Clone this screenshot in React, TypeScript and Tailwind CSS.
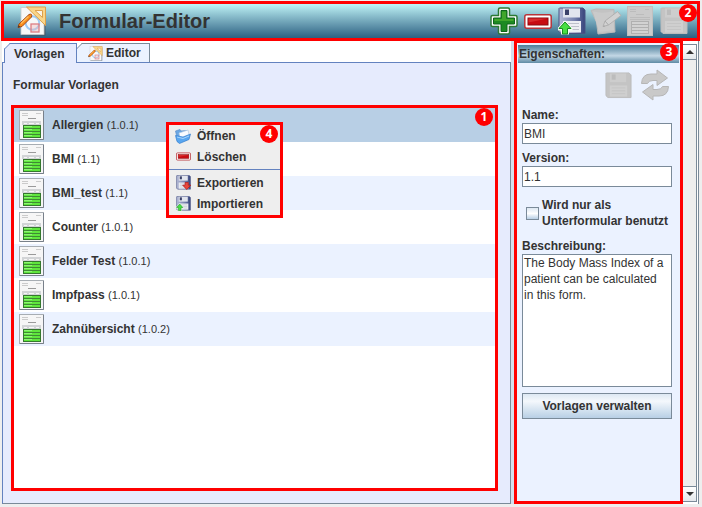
import { useState, type ReactNode } from 'react'
import clsx from 'clsx'

const templates = [
  { name: 'Allergien', version: '1.0.1' },
  { name: 'BMI', version: '1.1' },
  { name: 'BMI_test', version: '1.1' },
  { name: 'Counter', version: '1.0.1' },
  { name: 'Felder Test', version: '1.0.1' },
  { name: 'Impfpass', version: '1.0.1' },
  { name: 'Zahnübersicht', version: '1.0.2' },
]

function LogoIcon({ className }: { className: string }) {
  return (
    <svg viewBox="0 0 30 30" className={className} aria-hidden="true">
      <path d="M5 29.500H28.500V3H26V27.500H5Z" fill="#4b4f55" opacity=".75" />
      <rect x="4" y="1.500" width="23" height="27" fill="#f7f8f8" stroke="#c5cace" strokeWidth=".8" />
      <circle cx="15.500" cy="17" r="6.800" fill="none" stroke="#9ccbf6" strokeWidth="2" />
      <rect x="14" y="18" width="8" height="8" fill="#f3b9b9" fillOpacity=".4" stroke="#dc7d83" strokeWidth="1.300" />
      <path d="M9.500 1H28.500V19.500Z" fill="#f9d689" stroke="#dda04b" />
      <path d="M18 4.500H25.500V11.500Z" fill="#fbf3e4" stroke="#dda04b" />
      <path d="M1 21.500 2 18 12 8.500Q15.500 7 14.500 11L5 20.500Z" fill="#f98d1a" stroke="#a34812" />
      <path d="M4 17.500 11.500 10.500" stroke="#ffc062" strokeWidth="1.200" />
      <path d="M1 21.500 1.600 19.200 3.200 20.800Z" fill="#333" />
    </svg>
  )
}

function PlusIcon() {
  return (
    <svg viewBox="0 0 28 28" className="size-[28px]" aria-hidden="true">
      <path
        d="M10 1h8q1.500 0 1.500 1.500V8.500h6Q27 8.500 27 10v8q0 1.500-1.500 1.500h-6v6Q19.500 27 18 27h-8q-1.500 0-1.500-1.500v-6h-6Q1 19.500 1 18v-8q0-1.500 1.500-1.500h6v-6Q8.500 1 10 1Z"
        fill="#fff"
        stroke="#2c7a35"
        strokeWidth="1.500"
      />
      <path d="M11 3.500h6V11h7.500v6H17v7.500h-6V17H3.500v-6H11Z" fill="#1d8a22" stroke="#0f6418" />
      <path d="M12 4.500h4V12h7.500v2H4.500v-2H12Z" fill="#54b52f" opacity=".65" />
    </svg>
  )
}

function MinusIcon({ className }: { className: string }) {
  return (
    <svg viewBox="0 0 28 15" className={className} aria-hidden="true">
      <rect x=".8" y=".8" width="26.400" height="13.400" rx="2" fill="#fff" stroke="#b8343a" strokeWidth="1.500" />
      <rect x="4" y="4" width="20" height="7" fill="#c80b12" stroke="#8d0a10" />
      <path d="M4.500 4.500H23.500L4.500 8.500Z" fill="#e2413d" opacity=".6" />
    </svg>
  )
}

function DiskIcon({ className, disabled, arrow }: { className: string; disabled?: boolean; arrow?: 'up' | 'down' }) {
  return (
    <svg viewBox="0 0 28 28" className={className} aria-hidden="true">
      <defs>
        <linearGradient id="disk-body">
          <stop offset="0" stopColor="#b4bad6" />
          <stop offset=".6" stopColor="#7580ad" />
          <stop offset="1" stopColor="#36437b" />
        </linearGradient>
      </defs>
      <path
        d="M1.500 1H25L27 3V26.500H3L1 24.500V1.500Z"
        fill={disabled ? '#c4c4c4' : 'url(#disk-body)'}
        stroke={disabled ? '#bcbcbc' : '#4a5585'}
      />
      <rect x="5" y="1.500" width="17" height="9" fill={disabled ? '#cdcdcd' : '#e2e5ee'} />
      <rect x="7" y="2.500" width="4" height="5.500" fill={disabled ? '#bcbcbc' : '#3b4269'} />
      <rect x="5" y="14" width="18" height="11.500" fill={disabled ? '#cfcfcf' : '#eceef3'} />
      <path d="M7 16.500H21M7 19.500H21M7 22.500H21" stroke={disabled ? '#c5c5c5' : '#bdc0cb'} />
      {arrow === 'up' && (
        <path
          d="M7 13.500 14.500 21V23.500H11V27.500H3V23.500H-.5V21Z"
          fill="#f4fff2"
        />
      )}
      {arrow === 'up' && <path d="M7 15 13 21.500H9.500V27H4.500V21.500H1Z" fill="#48df42" stroke="#158b20" />}
      {arrow === 'down' && (
        <path d="M17 14H23V19H27.500L20 27 12.500 19H17Z" fill="#e8463c" stroke="#b01c1c" strokeWidth="1.500" />
      )}
    </svg>
  )
}

function EditIcon() {
  return (
    <svg viewBox="0 0 32 28" className="h-[28px] w-[32px]" aria-hidden="true">
      <path d="M1 3.500 6 2 24 2.500 25 25 8 27 6.500 15Z" fill="#c3c3c3" stroke="#bababa" />
      <path d="M3 4.500Q14 7 23 4L24 23 9 25Z" fill="#cacaca" />
      <path d="M13 19.500 15 14 27.500 4.500 31 8.500 18.500 18Z" fill="#d2d2d2" stroke="#b0b0b0" />
      <path d="M15 14 18.500 18M13 19.500 15 19" stroke="#a8a8a8" />
    </svg>
  )
}

function DisabledFormIcon() {
  return (
    <svg viewBox="0 0 26 30" className="h-[30px] w-[26px]" aria-hidden="true">
      <rect x=".5" y=".5" width="25" height="29" fill="#cbcbcb" stroke="#c0c0c0" />
      <path d="M3 3.500H9M3 5.500H9M18 3.500H22M9 8.500H17M3 11.500H23M3 13.500H23" stroke="#bcbcbc" />
      <rect x="4.500" y="15.500" width="17" height="12" fill="#d2d2d2" stroke="#b0b0b0" />
      <path d="M5 18.500H21M5 21.500H21M5 24.500H21" stroke="#b0b0b0" />
    </svg>
  )
}

function TemplateIcon() {
  return (
    <svg viewBox="0 0 25 30" className="h-[30px] w-[25px] shrink-0" aria-hidden="true">
      <rect x=".5" y=".5" width="24" height="29" fill="#f6f6f6" stroke="#a7adb3" />
      <path d="M1 29.500H24.500V1" fill="none" stroke="#78808a" />
      <path d="M3 3.500H9M3 5.500H9M17 3.500H22" stroke="#cbcbcb" />
      <path d="M9 8.500H17" stroke="#9a9a9a" />
      <path d="M3 11H22V15H3Z" fill="#d2d4d6" />
      <path d="M5 13.500H8M10 13.500H15M17 13.500H20" stroke="#f6f6f6" />
      <rect x="4.500" y="15.500" width="17" height="12" fill="#5fe63d" stroke="#35782e" />
      <path d="M5 16.500H13M5 19.500H13M5 22.500H13M5 25.500H13" stroke="#8df573" />
      <path d="M5 18.500H21M5 21.500H21M5 24.500H21" stroke="#3f8a35" />
    </svg>
  )
}

function FolderIcon() {
  return (
    <svg viewBox="0 0 18 16" className="h-[16px] w-[18px]" aria-hidden="true">
      <path d="M1.500 3 6 1.500 7 3 13 2.500V12L4 14Z" fill="#6aa6e2" stroke="#5b8fca" strokeWidth=".7" />
      <path d="M5 5 14 2 15.500 8.500 6 10Z" fill="#f8fbff" stroke="#b3cae2" strokeWidth=".7" />
      <path d="M1.500 7.500 9 9 16.500 6 15 11.500 5.500 15.500 3 13.500Z" fill="#58a6f0" stroke="#377fce" strokeWidth=".7" />
      <path d="M3 9 9 10.500 15 8" stroke="#a6d4fd" fill="none" />
    </svg>
  )
}

function RefreshIcon() {
  return (
    <svg viewBox="0 0 30 32" className="h-[32px] w-[30px]" aria-hidden="true">
      <g fill="#c9c9c9" stroke="#b6b6b6">
        <path d="M1.500 14.500Q2 5 11 5H17V1L27.500 9 17 16.500V11.500H13Q8.500 11.500 7.500 14.500Z" />
        <path d="M28.500 17.500Q28 27 19 27H13V31L2.500 23 13 15.500V20.500H17Q21.500 20.500 22.500 17.500Z" />
      </g>
    </svg>
  )
}

function Badge({ n, className }: { n: number; className: string }) {
  return (
    <span
      className={clsx(
        'absolute z-20 flex size-[18px] items-center justify-center rounded-full bg-[#ff0000] font-["Open_Sans",sans-serif] text-[12px] leading-none font-bold text-white',
        className,
      )}
    >
      {n}
    </span>
  )
}

function ToolButton({ label, disabled, children }: { label: string; disabled?: boolean; children: ReactNode }) {
  return (
    <button
      type="button"
      aria-label={label}
      title={label}
      disabled={disabled}
      className="flex h-8 w-[34px] items-center justify-center"
    >
      {children}
    </button>
  )
}

function TabCorner({ active }: { active: boolean }) {
  return (
    <svg viewBox="0 0 7 7" className="absolute -top-px -left-px size-[7px]" aria-hidden="true">
      <path d="M0 0H6L0 6Z" fill="#fff" />
      <path d="M0 6.500 6.500 0" stroke={active ? '#6382bf' : '#7a8a99'} />
    </svg>
  )
}

function MenuItem({ icon, children }: { icon: ReactNode; children: ReactNode }) {
  return (
    <button type="button" role="menuitem" className="flex h-[21px] w-full items-center gap-1 pl-1 text-left">
      <span className="flex w-5 justify-center">{icon}</span>
      {children}
    </button>
  )
}

function ContextMenu() {
  return (
    <div
      role="menu"
      className="absolute top-[14px] left-[152px] z-10 w-[117px] border-3 border-[#ff0000] bg-[#eeeeee] pb-px"
    >
      <MenuItem icon={<FolderIcon />}>Öffnen</MenuItem>
      <MenuItem icon={<MinusIcon className="h-[9px] w-[15px]" />}>Löschen</MenuItem>
      <div role="separator" className="my-[2px] h-px bg-[#6382bf]" />
      <MenuItem icon={<DiskIcon className="size-[15px]" arrow="down" />}>Exportieren</MenuItem>
      <MenuItem icon={<DiskIcon className="size-[15px]" arrow="up" />}>Importieren</MenuItem>
      <Badge n={4} className="top-0 right-[2px]" />
    </div>
  )
}

function ScrollButton({ label, down }: { label: string; down?: boolean }) {
  return (
    <button
      type="button"
      aria-label={label}
      className={clsx(
        'flex h-[15px] items-center justify-center border-[#7a8a99] bg-linear-to-b from-white to-[#e4e8ec]',
        down ? 'border-t' : 'border-b',
      )}
    >
      <svg viewBox="0 0 8 4" className={clsx('h-1 w-2', down && 'rotate-180')} aria-hidden="true">
        <path d="M4 0 8 4H0Z" fill="#333" />
      </svg>
    </button>
  )
}

export default function App() {
  const [selected, setSelected] = useState(0)
  const field = 'block w-full border border-[#7a8a99] bg-white pl-px font-normal outline-none'

  return (
    <div className='flex min-h-screen flex-col bg-[#eeeeee] pt-px pb-[3px] pl-px font-["Liberation_Sans",Arial,sans-serif] text-[12px] leading-4 font-bold text-[#333333]'>
      <header className="relative mr-[2px] flex h-10 items-center border-3 border-[#ff0000] bg-linear-to-b from-[#c0f4f6] to-[#2d6182] pr-[6px] pl-[13px]">
        <LogoIcon className="size-[30px]" />
        <h1 className="ml-3 flex-1 text-[20px]">Formular-Editor</h1>
        <ToolButton label="Neu">
          <PlusIcon />
        </ToolButton>
        <ToolButton label="Löschen">
          <MinusIcon className="h-[15px] w-[28px]" />
        </ToolButton>
        <ToolButton label="Importieren">
          <DiskIcon className="size-[28px]" arrow="up" />
        </ToolButton>
        <ToolButton label="Bearbeiten" disabled>
          <EditIcon />
        </ToolButton>
        <ToolButton label="Formular" disabled>
          <DisabledFormIcon />
        </ToolButton>
        <ToolButton label="Speichern" disabled>
          <DiskIcon className="size-[28px]" disabled />
        </ToolButton>
        <Badge n={2} className="top-0 right-0" />
      </header>

      <div className="flex flex-1 pr-[3px]">
        <main className="flex flex-1 flex-col pl-px">
          <div role="tablist" className="flex bg-white pt-[2px] pl-[2px]">
            <button
              type="button"
              role="tab"
              aria-selected="true"
              className="relative z-10 -mb-px h-5 w-[73px] border border-b-0 border-[#6382bf] bg-[#e6ebfd] pl-[9px] text-left"
            >
              <TabCorner active />
              Vorlagen
            </button>
            <button
              type="button"
              role="tab"
              aria-selected="false"
              className="relative flex h-[19px] w-[73px] items-center gap-[3px] border border-b-0 border-l-0 border-[#7a8a99] bg-[#ebf2ff] pl-[11px]"
            >
              <TabCorner active={false} />
              <LogoIcon className="size-[15px]" />
              Editor
            </button>
          </div>

          <section className="flex flex-1 flex-col border border-r-[#7a8a99] border-b-[#7a8a99] border-t-[#6382bf] border-l-[#6382bf] bg-[#e6ebfd] pt-[14px] pr-3 pb-3 pl-2">
            <h2 className="mb-[12px] pl-[2px]">Formular Vorlagen</h2>
            <div className="relative flex-1 border-3 border-[#ff0000] bg-white">
              <ul>
                {templates.map((template, i) => (
                  <li key={template.name}>
                    <button
                      type="button"
                      onClick={() => setSelected(i)}
                      className={clsx(
                        'flex h-[34px] w-full items-center gap-2 pl-[5px] text-left',
                        i === selected ? 'bg-[#b8cfe5]' : i % 2 === 0 ? 'bg-[#ebf2ff]' : 'bg-white',
                      )}
                    >
                      <TemplateIcon />
                      <span>
                        {template.name} <span className="text-[11px] font-normal">({template.version})</span>
                      </span>
                    </button>
                  </li>
                ))}
              </ul>
              <ContextMenu />
              <Badge n={1} className="top-0 right-[2px]" />
            </div>
          </section>
        </main>

        <aside className="flex w-[188px] border-r border-[#7a8a99] bg-[#d5dfee] pl-[3px]">
          <div className="relative w-[169px] border-3 border-t-2 border-[#ff0000] bg-[#ebf2ff]">
            <h2 className="mx-px mt-[2px] h-[18px] bg-linear-to-b from-[#4c7e99] via-[#c3d7e5] via-60% to-[#5e8ba5] pl-px leading-[18px]">
              Eigenschaften:
            </h2>
            <Badge n={3} className="top-0 right-[2px]" />
            <div className="flex justify-end gap-[3px] px-2 pt-[6px]">
              <ToolButton label="Speichern" disabled>
                <DiskIcon className="size-[27px]" disabled />
              </ToolButton>
              <ToolButton label="Aktualisieren" disabled>
                <RefreshIcon />
              </ToolButton>
            </div>
            <form className="pt-[6px] pr-2 pl-[5px]" onSubmit={(e) => e.preventDefault()}>
              <label htmlFor="name" className="block">
                Name:
              </label>
              <input id="name" defaultValue="BMI" className={clsx(field, 'h-[21px]')} />
              <label htmlFor="version" className="mt-[6px] block">
                Version:
              </label>
              <input id="version" defaultValue="1.1" className={clsx(field, 'h-[21px]')} />
              <div className="mt-[10px] flex items-center gap-[3px] pl-1">
                <input
                  id="subform"
                  type="checkbox"
                  className="size-[13px] shrink-0 appearance-none border border-[#7a8a99] bg-linear-to-b from-[#dde8f3] via-white to-[#b8cfe5] checked:bg-none checked:bg-[#6382bf]"
                />
                <label htmlFor="subform" className="whitespace-nowrap">
                  Wird nur als
                  <br />
                  Unterformular benutzt
                </label>
              </div>
              <label htmlFor="description" className="mt-[9px] block">
                Beschreibung:
              </label>
              <textarea
                id="description"
                defaultValue="The Body Mass Index of a patient can be calculated in this form."
                className={clsx(field, 'h-[133px] resize-none pr-1')}
              />
              <button
                type="button"
                className="mt-[6px] h-[26px] w-full border border-[#7a8a99] bg-linear-to-b from-[#dde8f3] via-[#f4f8fc] via-30% to-[#b8cfe5]"
              >
                Vorlagen verwalten
              </button>
            </form>
          </div>
          <div className="flex flex-1 bg-white pt-[3px] pr-px pb-[2px]">
            <div className="flex flex-1 flex-col justify-between border border-l-0 border-[#7a8a99] bg-[#eeeeee]">
              <ScrollButton label="Nach oben" />
              <ScrollButton label="Nach unten" down />
            </div>
          </div>
        </aside>
      </div>
    </div>
  )
}
